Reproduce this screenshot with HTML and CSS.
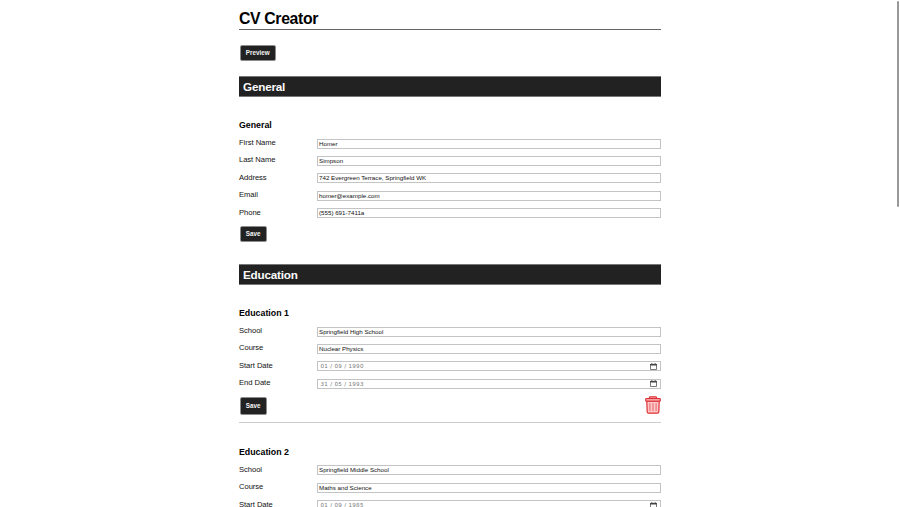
FILE: index.html
```html
<!DOCTYPE html>
<html lang="en">
<head>
<meta charset="utf-8">
<title>CV Creator</title>
<link rel="stylesheet" href="styles.css">
</head>
<body>
<main class="page">
  <h1 class="title">CV Creator</h1>
  <button class="btn preview">Preview</button>

  <section class="section">
    <h2 class="bar">General</h2>
    <h3 class="heading">General</h3>
    <div class="row"><span class="label">First Name</span><div class="field">Homer</div></div>
    <div class="row"><span class="label">Last Name</span><div class="field">Simpson</div></div>
    <div class="row"><span class="label">Address</span><div class="field">742 Evergreen Terrace, Springfield WK</div></div>
    <div class="row"><span class="label">Email</span><div class="field">homer@example.com</div></div>
    <div class="row"><span class="label">Phone</span><div class="field">(555) 691-7411a</div></div>
    <div class="actions"><button class="btn">Save</button></div>
  </section>

  <section class="section">
    <h2 class="bar">Education</h2>
    <h3 class="heading">Education 1</h3>
    <div class="row"><span class="label">School</span><div class="field">Springfield High School</div></div>
    <div class="row"><span class="label">Course</span><div class="field">Nuclear Physics</div></div>
    <div class="row"><span class="label">Start Date</span><div class="field date"><span>01 / 09 / 1990</span><svg class="calendar" viewBox="0 0 7 7"><path d="M.5 1.3h6v5.2h-6z" fill="none" stroke="#555" stroke-width=".8"/><path d="M.2 1h6.6v1.6H.2zM1.3.2h1v1h-1zM4.7.2h1v1h-1z" fill="#444"/></svg></div></div>
    <div class="row"><span class="label">End Date</span><div class="field date"><span>31 / 05 / 1993</span><svg class="calendar" viewBox="0 0 7 7"><path d="M.5 1.3h6v5.2h-6z" fill="none" stroke="#555" stroke-width=".8"/><path d="M.2 1h6.6v1.6H.2zM1.3.2h1v1h-1zM4.7.2h1v1h-1z" fill="#444"/></svg></div></div>
    <div class="actions split">
      <button class="btn tall">Save</button>
      <svg class="trash" viewBox="0 0 16 18" fill="#ffc9c9" stroke="#dc3037" stroke-width="1.2" stroke-linejoin="round">
        <path d="M4.5 2.5V1.6Q4.5.8 5.3.8h5.4q.8 0 .8.8v.9"/>
        <path d="M1.8 5.2h12.4l-.4 10.8q-.1 1.2-1.3 1.2h-9q-1.2 0-1.3-1.2z"/>
        <rect x=".7" y="2.6" width="14.6" height="2.6" rx=".8"/>
        <path d="M4.9 7.6v7M8 7.6v7M11.1 7.6v7" fill="none" stroke="#e8747a" stroke-width="1.2" stroke-linecap="round"/>
      </svg>
    </div>
    <hr class="divider">
    <h3 class="heading next">Education 2</h3>
    <div class="row"><span class="label">School</span><div class="field">Springfield Middle School</div></div>
    <div class="row"><span class="label">Course</span><div class="field">Maths and Science</div></div>
    <div class="row"><span class="label">Start Date</span><div class="field date"><span>01 / 09 / 1985</span><svg class="calendar" viewBox="0 0 7 7"><path d="M.5 1.3h6v5.2h-6z" fill="none" stroke="#555" stroke-width=".8"/><path d="M.2 1h6.6v1.6H.2zM1.3.2h1v1h-1zM4.7.2h1v1h-1z" fill="#444"/></svg></div></div>
  </section>
</main>
<div class="scroll-thumb"></div>
</body>
</html>
```
FILE: styles.css
```css
* { box-sizing: border-box; }
html, body { height: 507px; overflow: hidden; }
body {
  margin: 0;
  background: #fff;
  color: #111;
  font-family: "Liberation Sans", Arial, sans-serif;
}
.page { width: 422px; margin: 0 auto 0 239px; padding-top: 8px; }
.title {
  margin: 0;
  height: 22px;
  border-bottom: 1px solid #666;
  color: #000;
  font-size: 15.8px;
  letter-spacing: -.35px;
  line-height: 22px;
}
.btn {
  display: block;
  height: 16px;
  margin: 0 0 0 .5px;
  padding: 0 5.3px;
  border: 1px solid #8c8c8c;
  border-radius: 2px;
  background: #222;
  color: #f5f5f5;
  font: bold 6.3px/14px "Liberation Sans", Arial, sans-serif;
}
.preview { margin-top: 15px; margin-bottom: 15px; }
.bar {
  height: 21px;
  margin: 0;
  padding-left: 4px;
  border: 1px solid #777;
  border-width: 1px 0;
  background: #222;
  color: #fafafa;
  font-size: 11.7px;
  letter-spacing: -.2px;
  line-height: 19px;
}
.heading {
  height: 12px;
  margin: 22px 0 7.6px;
  color: #000;
  font-size: 8.8px;
  line-height: 12px;
}
.row {
  display: grid;
  grid-template-columns: 77.5px 1fr;
  align-items: center;
  height: 10px;
  margin-bottom: 7.4px;
}
.label { font-size: 7.6px; letter-spacing: -.04px; line-height: 10px; position: relative; top: -.5px; }
.field {
  height: 10px;
  padding-left: 1.5px;
  border: 1px solid #c4c4c6;
  font-size: 6.2px;
  line-height: 8px;
  white-space: nowrap;
}
.date {
  display: flex;
  align-items: center;
  justify-content: space-between;
  padding: 0 3px;
  color: #777;
  font-family: "DejaVu Sans", sans-serif;
  font-size: 5.6px;
  letter-spacing: .28px;
}
.calendar { width: 7px; height: 7px; }
.actions { height: 38.4px; }
.split {
  display: flex;
  align-items: flex-start;
  justify-content: space-between;
  height: 26px;
}
.tall { height: 18px; margin-top: 1px; }
.trash { width: 16px; height: 18px; }
.divider { height: 1px; margin: 0; border: 0; background: #ccc; }
.next { margin-top: 22.6px; }
.scroll-thumb {
  position: absolute;
  top: 1px;
  right: 1px;
  width: 2px;
  height: 206px;
  border-radius: 1px;
  background: #999;
}
```
